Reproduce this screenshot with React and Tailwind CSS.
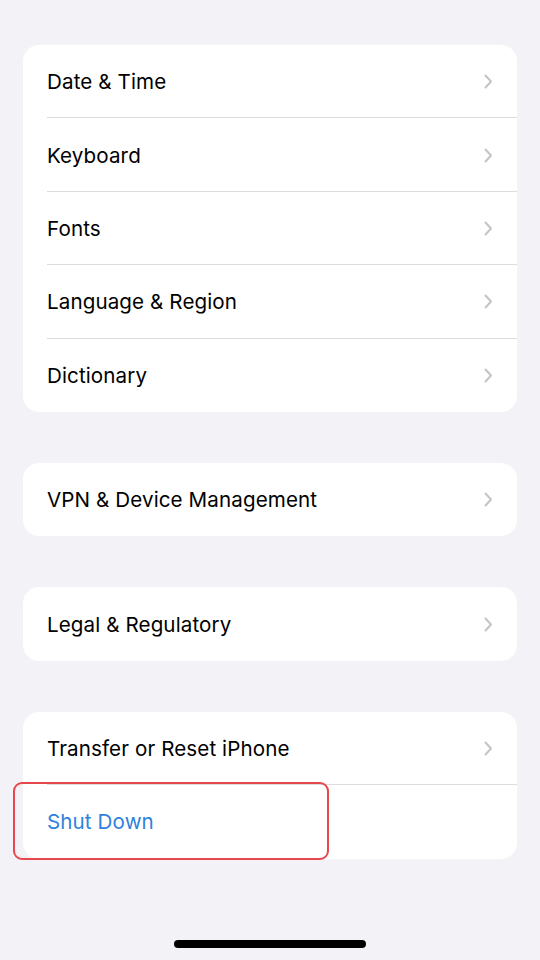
import React from 'react';

const Chevron = () => (
  <svg width="9" height="15" viewBox="0 0 9 15" fill="none" className="shrink-0">
    <path d="M1.5 1.5L7 7.5L1.5 13.5" stroke="#c4c4c7" strokeWidth="2" strokeLinecap="round" strokeLinejoin="round" />
  </svg>
);

const Row = ({ label, last, chevron = true, blue }) => (
  <div className="relative h-[73.4px] flex items-center pl-6 pr-6">
    <span className={`flex-1 pt-[2px] text-[20.6px] tracking-[0.1px] ${blue ? 'text-[#2f82dc]' : 'text-black'}`}>{label}</span>
    {chevron && <Chevron />}
    {!last && <div className="absolute left-6 right-0 bottom-0 h-px bg-[#dcdce0]" />}
  </div>
);

const Group = ({ children }) => (
  <div className="bg-white rounded-[16px] overflow-hidden">{children}</div>
);

export default function App() {
  return (
    <div className="w-[540px] h-[960px] bg-[#f2f2f7] flex flex-col px-[23px] pt-[45px] relative" style={{ fontFamily: 'Inter, "Noto Sans", sans-serif' }}>
      <div className="flex flex-col gap-[51px]">
        <Group>
          <Row label="Date & Time" />
          <Row label="Keyboard" />
          <Row label="Fonts" />
          <Row label="Language & Region" />
          <Row label="Dictionary" last />
        </Group>
        <Group>
          <Row label="VPN & Device Management" last />
        </Group>
        <Group>
          <Row label="Legal & Regulatory" last />
        </Group>
        <div className="relative">
          <Group>
            <Row label="Transfer or Reset iPhone" />
            <Row label="Shut Down" last chevron={false} blue />
          </Group>
          <div className="absolute left-[-10px] top-[70px] w-[316px] h-[78px] border-2 border-[#e5484d] rounded-[9px]" />
        </div>
      </div>
      <div className="absolute left-[174px] top-[940px] w-[192px] h-[8px] rounded-full bg-black" />
    </div>
  );
}
